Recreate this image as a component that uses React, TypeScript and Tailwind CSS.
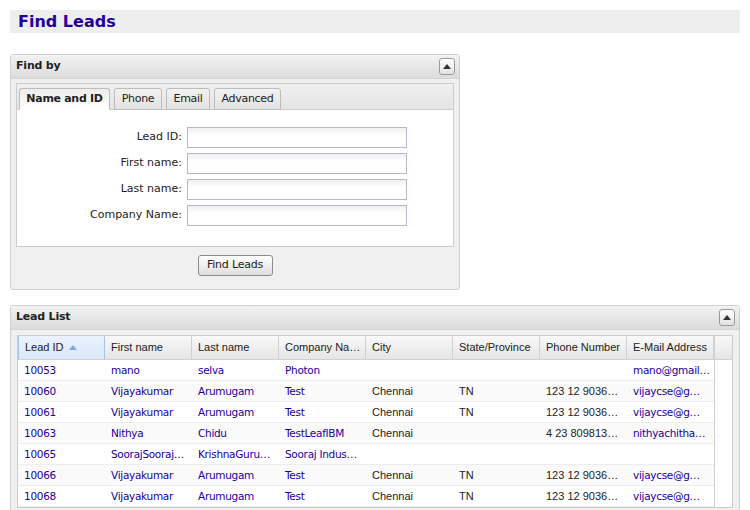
import React, { useState } from 'react'

interface Lead {
  id: string
  first: string
  last: string
  company: string
  city: string
  state: string
  phone: string
  email: string
}

const leads: Lead[] = [
  { id: '10053', first: 'mano', last: 'selva', company: 'Photon', city: '', state: '', phone: '', email: 'mano@gmail…' },
  { id: '10060', first: 'Vijayakumar', last: 'Arumugam', company: 'Test', city: 'Chennai', state: 'TN', phone: '123 12 9036…', email: 'vijaycse@g…' },
  { id: '10061', first: 'Vijayakumar', last: 'Arumugam', company: 'Test', city: 'Chennai', state: 'TN', phone: '123 12 9036…', email: 'vijaycse@g…' },
  { id: '10063', first: 'Nithya', last: 'Chidu', company: 'TestLeafIBM', city: 'Chennai', state: '', phone: '4 23 809813…', email: 'nithyachitha…' },
  { id: '10065', first: 'SoorajSooraj…', last: 'KrishnaGuru…', company: 'Sooraj Indus…', city: '', state: '', phone: '', email: '' },
  { id: '10066', first: 'Vijayakumar', last: 'Arumugam', company: 'Test', city: 'Chennai', state: 'TN', phone: '123 12 9036…', email: 'vijaycse@g…' },
  { id: '10068', first: 'Vijayakumar', last: 'Arumugam', company: 'Test', city: 'Chennai', state: 'TN', phone: '123 12 9036…', email: 'vijaycse@g…' },
]

const columns = ['Lead ID', 'First name', 'Last name', 'Company Na…', 'City', 'State/Province', 'Phone Number', 'E-Mail Address']

const verdana = "font-['DejaVu_Sans',Verdana,sans-serif]"
const arial = "font-['Liberation_Sans',Arial,sans-serif]"

const CollapseButton: React.FC = () => (
  <button className="w-[16px] h-[17px] rounded-[3px] border border-[#9a9a9a] bg-gradient-to-b from-white to-[#e2e2e2] flex items-center justify-center">
    <svg width="8" height="5" viewBox="0 0 8 5">
      <path d="M0 5 L4 0 L8 5 Z" fill="#333" />
    </svg>
  </button>
)

const PanelHeader: React.FC<{ title: string }> = ({ title }) => (
  <div className="h-[24px] flex items-center justify-between pl-[5px] pr-[4px] bg-gradient-to-b from-[#f2f2f2] to-[#dcdcdc] border-b border-[#d4d4d4]">
    <span className={`${verdana} text-[11px] font-bold text-[#222] tracking-[-0.2px]`}>{title}</span>
    <CollapseButton />
  </div>
)

const tabs = [
  { label: 'Name and ID', w: 'w-[91px]' },
  { label: 'Phone', w: 'w-[48px]' },
  { label: 'Email', w: 'w-[44px]' },
  { label: 'Advanced', w: 'w-[67px]' },
]

const App: React.FC = () => {
  const [activeTab, setActiveTab] = useState(0)

  const fields = ['Lead ID:', 'First name:', 'Last name:', 'Company Name:']

  return (
    <div className="w-[750px] bg-white pt-[10px] px-[10px] pb-[20px]">
      <div className="h-[23px] bg-[#eeeeee] flex items-center pl-[8px]">
        <h1 className={`${verdana} text-[16px] font-bold text-[#22009c] leading-none`}>Find Leads</h1>
      </div>

      {/* Find by panel */}
      <div className="mt-[21px] w-[450px] border border-[#d0d0d0] rounded-[3px] bg-[#f0f0f0]">
        <PanelHeader title="Find by" />
        <div className="px-[5px] pt-[4px] pb-[13px]">
          <div className="border border-[#cccccc] bg-white">
            <div className="flex gap-[4px] pl-[2px] pt-[4px] bg-gradient-to-b from-[#f0f0f0] to-[#e4e4e4] border-b border-[#cccccc]">
              {tabs.map((t, i) => (
                <button
                  key={t.label}
                  onClick={() => setActiveTab(i)}
                  className={`${verdana} ${t.w} h-[22px] -mb-px text-[11px] tracking-[-0.3px] whitespace-nowrap rounded-t-[3px] border border-[#bcbcbc] ${
                    i === activeTab
                      ? 'font-bold text-[#222] bg-gradient-to-b from-[#ededed] to-white border-b-white'
                      : 'text-[#222] bg-gradient-to-b from-[#f2f2f2] to-[#e2e2e2]'
                  }`}
                >
                  {t.label}
                </button>
              ))}
            </div>
            <div className="pt-[17px] pb-[20px] flex flex-col gap-[5px]">
              {fields.map((f) => (
                <div key={f} className="flex items-center">
                  <label className={`${verdana} w-[165px] text-right text-[11px] text-[#222]`}>{f}</label>
                  <input
                    type="text"
                    className="ml-[5px] w-[220px] h-[21px] border border-[#b5b8c8] bg-gradient-to-b from-[#f0f0f0] to-white to-40% outline-none"
                  />
                </div>
              ))}
            </div>
          </div>
          <div className="flex justify-center mt-[8px]">
            <button
              className={`${verdana} w-[75px] h-[21px] text-[11px] text-[#222] tracking-[-0.2px] rounded-[3px] border border-[#8c8c8c] bg-gradient-to-b from-white to-[#dedede]`}
            >
              Find Leads
            </button>
          </div>
        </div>
      </div>

      {/* Lead List panel */}
      <div className="mt-[15px] border border-[#d0d0d0] rounded-[3px] bg-[#f0f0f0]">
        <PanelHeader title="Lead List" />
        <div className="px-[6px] pt-[5px] pb-[6px]">
          <div className="border border-[#cccccc] bg-white flex">
            <div className="w-[696px]">
              <div className="flex h-[24px] bg-gradient-to-b from-[#f9f9f9] to-[#e5e5e5] border-b border-[#d0d0d0]">
                {columns.map((c, i) => (
                  <div
                    key={c}
                    className={`${arial} w-[87px] shrink-0 flex items-center px-[6px] text-[11px] text-[#222] whitespace-nowrap border-r ${
                      i === 0
                        ? 'bg-gradient-to-b from-[#ebf3fd] to-[#d9e8fb] border-[#a6c4e6] border-l'
                        : 'border-[#d0d0d0]'
                    }`}
                  >
                    {c}
                    {i === 0 && (
                      <svg width="8" height="5" viewBox="0 0 8 5" className="ml-[5px]">
                        <path d="M0 5 L4 0 L8 5 Z" fill="#84a9d8" />
                      </svg>
                    )}
                  </div>
                ))}
              </div>
              {leads.map((l, r) => (
                <div
                  key={l.id}
                  className={`flex h-[21px] border-b border-[#ededed] ${r % 2 === 1 ? 'bg-[#fafafa]' : 'bg-white'}`}
                >
                  {[l.id, l.first, l.last, l.company, l.city, l.state, l.phone, l.email].map((v, i) => {
                    const link = i < 4 || i === 7
                    return (
                      <div
                        key={i}
                        className={`w-[87px] shrink-0 pl-[6px] pr-[2px] leading-[20px] whitespace-nowrap overflow-hidden ${
                          link
                            ? `${verdana} text-[10.5px] text-[#22009c] tracking-[-0.3px]`
                            : `${arial} text-[11px] text-[#222]`
                        }`}
                      >
                        {v}
                      </div>
                    )
                  })}
                </div>
              ))}
            </div>
            <div className="flex-1 border-l border-[#d0d0d0]">
              <div className="h-[24px] bg-gradient-to-b from-[#f9f9f9] to-[#e5e5e5] border-b border-[#d0d0d0]" />
            </div>
          </div>
        </div>
      </div>
    </div>
  )
}

export default App
